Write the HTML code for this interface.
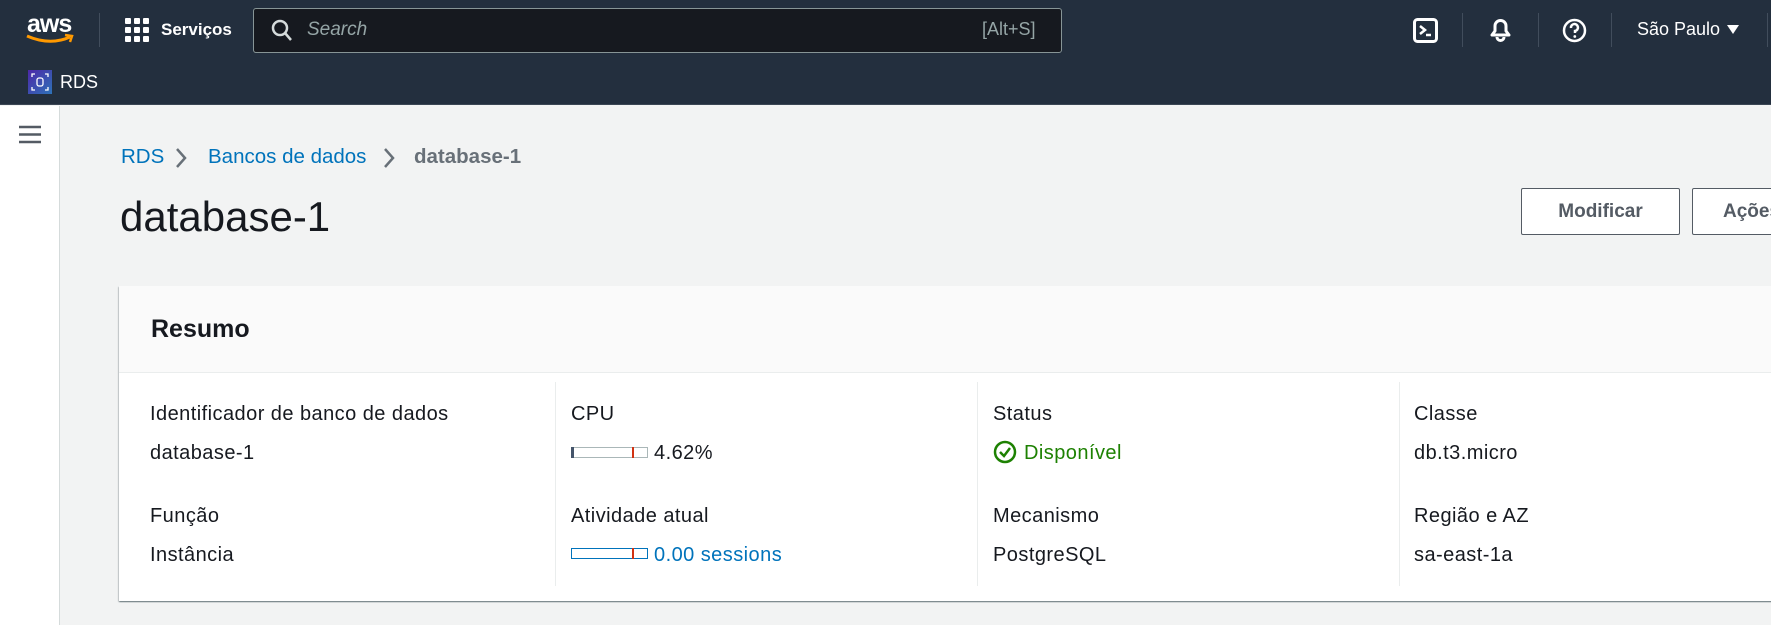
<!DOCTYPE html>
<html><head><meta charset="utf-8"><style>
*{margin:0;padding:0;box-sizing:border-box}
body{width:1771px;height:625px;overflow:hidden;background:#f2f3f3;font-family:"Liberation Sans",sans-serif;color:#16191f;position:relative}
.a{position:absolute;white-space:nowrap}
.nav{position:absolute;left:0;top:0;width:1771px;height:105px;background:#232f3e;border-bottom:1px solid #3b4654}
.vd{position:absolute;width:1px;background:#414d5c}
.lbl{font-size:20px;letter-spacing:0.45px;color:#16191f}
.col{position:absolute;top:382px;width:1px;height:204px;background:#eaeded}
</style></head><body>
<div class="nav"></div>
<div class="a" style="left:27px;top:10px;color:#fff;font-size:25px;font-weight:bold;letter-spacing:-1px">aws</div>
<svg class="a" style="left:25px;top:33px" width="50" height="12" viewBox="0 0 50 12"><path d="M2 3 Q25 13 45 4" stroke="#ff9900" stroke-width="3" fill="none"/><path d="M40 2 L47 3 L45 9" stroke="#ff9900" stroke-width="2.5" fill="none"/></svg>
<div class="vd" style="left:99px;top:13px;height:34px"></div>
<svg class="a" style="left:125px;top:18px" width="24" height="24"><g fill="#fff"><rect x="0" y="0" width="6" height="6" rx="1"/><rect x="9" y="0" width="6" height="6" rx="1"/><rect x="18" y="0" width="6" height="6" rx="1"/><rect x="0" y="9" width="6" height="6" rx="1"/><rect x="9" y="9" width="6" height="6" rx="1"/><rect x="18" y="9" width="6" height="6" rx="1"/><rect x="0" y="18" width="6" height="6" rx="1"/><rect x="9" y="18" width="6" height="6" rx="1"/><rect x="18" y="18" width="6" height="6" rx="1"/></g></svg>
<div class="a" style="left:161px;top:20px;color:#fff;font-size:17px;font-weight:bold">Serviços</div>
<div class="a" style="left:253px;top:8px;width:809px;height:45px;background:#16191f;border:1px solid #879596;border-radius:3px"></div>
<svg class="a" style="left:271px;top:19px" width="22" height="24"><circle cx="9" cy="9" r="7" stroke="#d5dbdb" stroke-width="2.5" fill="none"/><path d="M14 14 L20 21" stroke="#d5dbdb" stroke-width="2.5"/></svg>
<div class="a" style="left:307px;top:19px;color:#95a5a6;font-size:19px;font-style:italic">Search</div>
<div class="a" style="left:982px;top:19px;color:#95a5a6;font-size:18px">[Alt+S]</div>
<svg class="a" style="left:1413px;top:18px" width="25" height="25"><rect x="1.5" y="1.5" width="22" height="22" rx="3" stroke="#fff" stroke-width="3" fill="none"/><path d="M7 8 L12 12 L7 16" stroke="#fff" stroke-width="2.5" fill="none"/><path d="M13 17 H18" stroke="#fff" stroke-width="2.5"/></svg>
<div class="vd" style="left:1462px;top:13px;height:34px"></div>
<svg class="a" style="left:1488px;top:16px" width="25" height="27"><path d="M4 19 H21 L18 15 V10 A5.5 5.5 0 0 0 7 10 V15 Z" stroke="#fff" stroke-width="3" fill="none" stroke-linejoin="round"/><path d="M9 21 A3.5 3.5 0 0 0 16 21" stroke="#fff" stroke-width="3" fill="none"/></svg>
<div class="vd" style="left:1538px;top:13px;height:34px"></div>
<svg class="a" style="left:1562px;top:18px" width="25" height="25"><circle cx="12.5" cy="12.5" r="10.5" stroke="#fff" stroke-width="2.5" fill="none"/><path d="M9 10 A3.5 3.5 0 1 1 13 13 V15" stroke="#fff" stroke-width="2.5" fill="none"/><circle cx="12.8" cy="18.5" r="1.4" fill="#fff"/></svg>
<div class="vd" style="left:1611px;top:13px;height:34px"></div>
<div class="a" style="left:1637px;top:19px;color:#fff;font-size:18px">São Paulo</div>
<svg class="a" style="left:1727px;top:25px" width="12" height="10"><path d="M0 0 H12 L6 9 Z" fill="#fff"/></svg>
<div class="vd" style="left:1767px;top:13px;height:34px"></div>
<div class="a" style="left:28px;top:70px;width:24px;height:24px;background:linear-gradient(135deg,#4d27a8,#2e73b8)"></div>
<svg class="a" style="left:28px;top:70px" width="24" height="24"><g stroke="#fff" stroke-width="1.3" fill="none"><path d="M4 7 V4 H7 M17 4 H20 V7 M20 17 V20 H17 M7 20 H4 V17"/><rect x="9" y="8" width="6" height="8" rx="2"/></g></svg>
<div class="a" style="left:60px;top:72px;color:#fff;font-size:18px">RDS</div>
<div class="a" style="left:0;top:106px;width:60px;height:519px;background:#fff;border-right:1px solid #d5dbdb"></div>
<svg class="a" style="left:19px;top:125px" width="22" height="20"><g stroke="#545b64" stroke-width="2.5"><path d="M0 2 H22 M0 9.5 H22 M0 17 H22"/></g></svg>
<div class="a" style="left:121px;top:145px;font-size:20.5px;color:#0073bb">RDS</div>
<svg class="a" style="left:175px;top:147px" width="12" height="22"><path d="M2 2 L10 11 L2 20" stroke="#687078" stroke-width="2.5" fill="none"/></svg>
<div class="a" style="left:208px;top:145px;font-size:20.5px;color:#0073bb">Bancos de dados</div>
<svg class="a" style="left:383px;top:147px" width="12" height="22"><path d="M2 2 L10 11 L2 20" stroke="#687078" stroke-width="2.5" fill="none"/></svg>
<div class="a" style="left:414px;top:145px;font-size:20.5px;color:#687078;font-weight:bold">database-1</div>
<div class="a" style="left:120px;top:193px;font-size:42px;color:#16191f">database-1</div>
<div class="a" style="left:1521px;top:188px;width:159px;height:47px;background:#fff;border:1px solid #545b64;border-radius:2px;font-size:19px;font-weight:bold;color:#545b64;text-align:center;line-height:45px">Modificar</div>
<div class="a" style="left:1692px;top:188px;width:120px;height:47px;background:#fff;border:1px solid #545b64;border-radius:2px;font-size:19px;font-weight:bold;color:#545b64;line-height:45px;padding-left:30px">Ações</div>
<div class="a" style="left:119px;top:286px;width:1700px;height:315px;background:#fff;box-shadow:0 1px 1px 0 rgba(0,28,36,.4),1px 1px 1px 0 rgba(0,28,36,.15),-1px 1px 1px 0 rgba(0,28,36,.15)"></div>
<div class="a" style="left:119px;top:286px;width:1700px;height:87px;background:#fafafa;border-bottom:1px solid #eaeded"></div>
<div class="a" style="left:151px;top:315px;font-size:25px;font-weight:bold">Resumo</div>
<div class="col" style="left:555px"></div>
<div class="col" style="left:977px"></div>
<div class="col" style="left:1399px"></div>
<div class="a lbl" style="left:150px;top:403px">Identificador de banco de dados</div>
<div class="a lbl" style="left:150px;top:442px">database-1</div>
<div class="a lbl" style="left:150px;top:505px">Função</div>
<div class="a lbl" style="left:150px;top:544px">Instância</div>
<div class="a lbl" style="left:571px;top:403px">CPU</div>
<div class="a" style="left:571px;top:447px;width:77px;height:11px;border:1px solid #aab7b8"></div>
<div class="a" style="left:571px;top:447px;width:3px;height:11px;background:#44546a"></div>
<div class="a" style="left:632px;top:447px;width:2px;height:11px;background:#d13212"></div>
<div class="a lbl" style="left:654px;top:442px">4.62%</div>
<div class="a lbl" style="left:571px;top:505px">Atividade atual</div>
<div class="a" style="left:571px;top:548px;width:77px;height:11px;border:1px solid #0073bb"></div>
<div class="a" style="left:632px;top:548px;width:2px;height:11px;background:#d13212"></div>
<div class="a lbl" style="left:654px;top:544px;color:#0073bb">0.00 sessions</div>
<div class="a lbl" style="left:993px;top:403px">Status</div>
<svg class="a" style="left:993px;top:440px" width="24" height="24"><circle cx="12" cy="12" r="10" stroke="#1d8102" stroke-width="2.5" fill="none"/><path d="M7 12 L11 16 L17 8" stroke="#1d8102" stroke-width="2.5" fill="none"/></svg>
<div class="a lbl" style="left:1024px;top:442px;color:#1d8102">Disponível</div>
<div class="a lbl" style="left:993px;top:505px">Mecanismo</div>
<div class="a lbl" style="left:993px;top:544px">PostgreSQL</div>
<div class="a lbl" style="left:1414px;top:403px">Classe</div>
<div class="a lbl" style="left:1414px;top:442px">db.t3.micro</div>
<div class="a lbl" style="left:1414px;top:505px">Região e AZ</div>
<div class="a lbl" style="left:1414px;top:544px">sa-east-1a</div>
</body></html>
